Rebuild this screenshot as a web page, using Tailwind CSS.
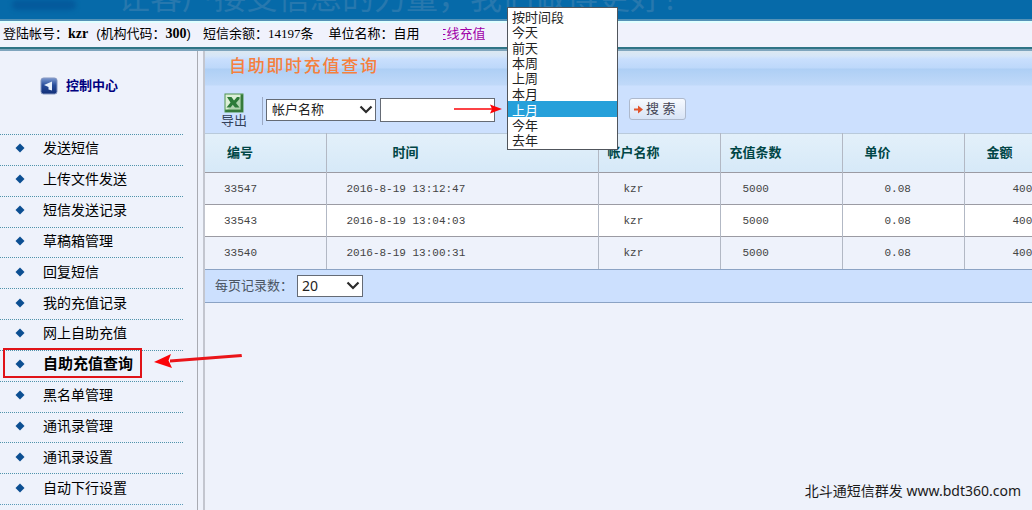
<!DOCTYPE html>
<html lang="zh-CN">
<head>
<meta charset="utf-8">
<title>自助即时充值查询</title>
<script src="https://cdn.jsdelivr.net/npm/@tailwindcss/browser@4"></script>
</head>
<body class="relative flex min-h-screen flex-col overflow-x-hidden bg-[#eef2fb] font-['Liberation_Sans','Noto_Sans_CJK_SC',sans-serif] text-[13px] text-black">

<header class="relative h-[21px] overflow-hidden border-b-2 border-[#5592b7] bg-[#066aa9]">
  <div class="absolute top-0 left-3 h-2.5 w-16 rounded-full bg-[#045a9c] blur-[2px]"></div>
  <p class="absolute -top-5 left-[118px] text-[32px] leading-9 whitespace-nowrap text-[#2778ae]">让客户接受信息的力量，我们做得更好！</p>
</header>

<div class="flex h-[30px] items-center border-y-2 border-t-[#e0ffff] border-b-[#7fa5bd] bg-[#f0f2fc] pb-1 pl-[3px] leading-5 whitespace-nowrap shadow-[inset_0_-2px_0_#2f7486]">
  <span>登陆帐号：<b class="font-['Liberation_Serif',serif] text-[14px]">kzr</b></span>
  <span class="ml-2">(机构代码：<b class="font-['Liberation_Serif',serif] text-[14px]">300</b>)</span>
  <span class="ml-3">短信余额：<span class="font-['Liberation_Serif',serif]">14197</span>条</span>
  <span class="ml-[15px]">单位名称：自用</span>
  <a href="#" class="ml-6 flex w-[42px] justify-end overflow-hidden text-[#a000a8]"><span>在线充值</span></a>
</div>

<div class="flex flex-1">
  <aside class="w-[198px] shrink-0 border-r border-[#a9abb2]">
    <h2 class="flex h-[83px] items-center gap-2 pb-3.5 pl-10 text-[13px] font-bold text-[#000080]">
      <svg class="size-[18px]" viewBox="0 0 18 18" aria-hidden="true">
        <defs><linearGradient id="tile" x1="0" y1="0" x2="0" y2="1"><stop offset="0" stop-color="#7d9ad0"/><stop offset=".45" stop-color="#274d9b"/><stop offset="1" stop-color="#122f78"/></linearGradient></defs>
        <rect x="1" y="1" width="16" height="16" rx="2.5" fill="url(#tile)" stroke="#8496c0"/>
        <path d="M4 8 L12 4.500 V13.500 L8.500 12.500 V10 Z" fill="#e8f1fc"/>
      </svg>
      控制中心
    </h2>
    <nav class="mr-3.5 border-b border-dotted border-[#5a9bb8]">
      <ul class="grid h-[370px] grid-rows-12 text-[14px]">
        <li class="flex items-center border-t border-dotted border-[#4f93ab] pb-[3px] pl-[15px]"><a href="#" class="flex items-center gap-[18px] leading-5"><svg class="size-2.5" viewBox="0 0 10 10" aria-hidden="true"><path d="M5 .5 L9.500 5 L5 9.500 L.5 5 Z" fill="#0c4f92"/></svg>发送短信</a></li>
        <li class="flex items-center border-t border-dotted border-[#4f93ab] pb-[3px] pl-[15px]"><a href="#" class="flex items-center gap-[18px] leading-5"><svg class="size-2.5" viewBox="0 0 10 10" aria-hidden="true"><path d="M5 .5 L9.500 5 L5 9.500 L.5 5 Z" fill="#0c4f92"/></svg>上传文件发送</a></li>
        <li class="flex items-center border-t border-dotted border-[#4f93ab] pb-[3px] pl-[15px]"><a href="#" class="flex items-center gap-[18px] leading-5"><svg class="size-2.5" viewBox="0 0 10 10" aria-hidden="true"><path d="M5 .5 L9.500 5 L5 9.500 L.5 5 Z" fill="#0c4f92"/></svg>短信发送记录</a></li>
        <li class="flex items-center border-t border-dotted border-[#4f93ab] pb-[3px] pl-[15px]"><a href="#" class="flex items-center gap-[18px] leading-5"><svg class="size-2.5" viewBox="0 0 10 10" aria-hidden="true"><path d="M5 .5 L9.500 5 L5 9.500 L.5 5 Z" fill="#0c4f92"/></svg>草稿箱管理</a></li>
        <li class="flex items-center border-t border-dotted border-[#4f93ab] pb-[3px] pl-[15px]"><a href="#" class="flex items-center gap-[18px] leading-5"><svg class="size-2.5" viewBox="0 0 10 10" aria-hidden="true"><path d="M5 .5 L9.500 5 L5 9.500 L.5 5 Z" fill="#0c4f92"/></svg>回复短信</a></li>
        <li class="flex items-center border-t border-dotted border-[#4f93ab] pb-[3px] pl-[15px]"><a href="#" class="flex items-center gap-[18px] leading-5"><svg class="size-2.5" viewBox="0 0 10 10" aria-hidden="true"><path d="M5 .5 L9.500 5 L5 9.500 L.5 5 Z" fill="#0c4f92"/></svg>我的充值记录</a></li>
        <li class="flex items-center border-t border-dotted border-[#4f93ab] pb-[3px] pl-[15px]"><a href="#" class="flex items-center gap-[18px] leading-5"><svg class="size-2.5" viewBox="0 0 10 10" aria-hidden="true"><path d="M5 .5 L9.500 5 L5 9.500 L.5 5 Z" fill="#0c4f92"/></svg>网上自助充值</a></li>
        <li class="relative flex items-center border-t border-dotted border-[#4f93ab] pb-[3px] pl-[15px]"><a href="#" aria-current="page" class="flex items-center gap-[18px] text-[15px] leading-5 font-bold"><svg class="size-2.5" viewBox="0 0 10 10" aria-hidden="true"><path d="M5 .5 L9.500 5 L5 9.500 L.5 5 Z" fill="#0c4f92"/></svg>自助充值查询</a>
          <span class="absolute -top-[3px] left-[3px] h-[30px] w-[139px] border-2 border-[#e01318]"></span>
          <svg class="absolute top-0 left-[154px] z-10 h-[22px] w-[90px]" viewBox="0 0 90 22" aria-hidden="true"><path d="M87.500 3 L88 6 L16 11.500 L16 8.500 Z" fill="#ea1519"/><path d="M0 11 L17 3 L14.500 9.500 L18 17 Z" fill="#fb0509"/></svg>
        </li>
        <li class="flex items-center border-t border-dotted border-[#4f93ab] pb-[3px] pl-[15px]"><a href="#" class="flex items-center gap-[18px] leading-5"><svg class="size-2.5" viewBox="0 0 10 10" aria-hidden="true"><path d="M5 .5 L9.500 5 L5 9.500 L.5 5 Z" fill="#0c4f92"/></svg>黑名单管理</a></li>
        <li class="flex items-center border-t border-dotted border-[#4f93ab] pb-[3px] pl-[15px]"><a href="#" class="flex items-center gap-[18px] leading-5"><svg class="size-2.5" viewBox="0 0 10 10" aria-hidden="true"><path d="M5 .5 L9.500 5 L5 9.500 L.5 5 Z" fill="#0c4f92"/></svg>通讯录管理</a></li>
        <li class="flex items-center border-t border-dotted border-[#4f93ab] pb-[3px] pl-[15px]"><a href="#" class="flex items-center gap-[18px] leading-5"><svg class="size-2.5" viewBox="0 0 10 10" aria-hidden="true"><path d="M5 .5 L9.500 5 L5 9.500 L.5 5 Z" fill="#0c4f92"/></svg>通讯录设置</a></li>
        <li class="flex items-center border-t border-dotted border-[#4f93ab] pb-[3px] pl-[15px]"><a href="#" class="flex items-center gap-[18px] leading-5"><svg class="size-2.5" viewBox="0 0 10 10" aria-hidden="true"><path d="M5 .5 L9.500 5 L5 9.500 L.5 5 Z" fill="#0c4f92"/></svg>自动下行设置</a></li>
      </ul>
    </nav>
  </aside>

  <main class="ml-[5px] flex min-w-0 flex-1 flex-col overflow-hidden border-l-2 border-[#c3c6cf]">
    <div class="h-[82px] shrink-0 bg-[linear-gradient(180deg,#dce8f1_0px,#d6e6f8_5px,#c9dffd_8px,#bdd8fa_17px,#aecff5_18px,#c0d9f9_34px,#cce0fe_35px,#cce0fe_100%)]">
      <h1 class="h-8 pl-6 text-[17px] leading-8 font-medium tracking-widest text-[#f5803e]">自助即时充值查询</h1>
      <form class="relative flex items-start pt-2.5 pl-[15px]">
        <button type="button" class="flex w-7 flex-col items-center text-[13px] leading-[15px] text-[#33415a]">
          <svg class="h-5 w-5" viewBox="0 0 20 20" aria-hidden="true">
            <rect x=".5" y=".5" width="19" height="19" fill="#4f9350"/>
            <rect x="1.500" y="1.500" width="15" height="15" fill="#dcefd6"/>
            <path d="M3 4 H7.500 L10 7.500 L13 4 H15.500 V6 L12 10 L15.500 14.500 H11 L8.800 11.800 L6.500 14.500 H2.500 L6.500 9.500 Z" fill="#2d7a38"/>
            <path d="M2 18 L18 2 V18 Z" fill="#2e7a3a" opacity=".25"/>
            <path d="M1.500 18 H18 V2" fill="none" stroke="#367a3b" stroke-width="2"/>
          </svg>
          <span>导出</span>
        </button>
        <span class="mt-1 ml-3.5 h-7 w-px bg-[#9ba9c4]"></span>
        <span class="relative mt-1.5 ml-[3px] h-[22px] w-[110px]">
          <select aria-label="查询字段" class="h-full w-full appearance-none border border-[#656b75] bg-white pl-[5px] text-[13px] leading-5 text-[#222]"><option>帐户名称</option></select>
          <svg class="pointer-events-none absolute top-1.5 right-[3px] h-2.5 w-[14px]" viewBox="0 0 14 10" aria-hidden="true"><path d="M1.500 1.500 L7 7 L12.500 1.500" fill="none" stroke="#2b2b2b" stroke-width="2.200"/></svg>
        </span>
        <input type="text" aria-label="关键字" class="mt-[5px] ml-1 h-6 w-[115px] border border-[#656b75] bg-white px-1">
        <svg class="absolute top-5 left-[248px] h-3 w-[50px]" viewBox="0 0 50 12" aria-hidden="true"><path d="M1 6 H40" stroke="#fb0509" stroke-width="1.600"/><path d="M49 6 L37 1.500 L39 6 L37 10.500 Z" fill="#fb0509"/></svg>
        <button type="submit" class="mt-[5px] ml-[134px] flex h-[22px] w-[57px] items-center rounded-[3px] border border-[#aeb9cc] bg-linear-to-b from-[#f7faff] to-[#d8e4f6] pl-[3px] text-[13px] leading-5 text-[#444455]">
          <svg class="size-[11px]" viewBox="0 0 11 11" aria-hidden="true"><path d="M1 4.500 H5 V1.500 L10 5.500 L5 9.500 V6.500 H1 Z" fill="#e2552c"/></svg>
          <span class="ml-0.5">搜 索</span>
        </button>
      </form>
    </div>

    <table class="w-[881px] table-fixed border-collapse border-t border-[#b9cadb] text-left font-['Liberation_Mono','Noto_Sans_CJK_SC',monospace] text-[11px] text-[#444444]">
      <colgroup><col class="w-[121px]"><col class="w-[272px]"><col class="w-[122px]"><col class="w-[122px]"><col class="w-[122px]"><col class="w-[122px]"></colgroup>
      <thead>
        <tr class="h-[39px] border-b border-[#9b9ba3] bg-linear-to-b from-[#e3f0fa] to-[#d6e9f8] text-[13px] text-[#004646]">
          <th class="border-r border-[#b2b8c4] pt-0.5 pl-[22px]">编号</th><th class="border-r border-[#b2b8c4] pt-0.5 pl-[66px]">时间</th><th class="border-r border-[#b2b8c4] pt-0.5 pl-[9px]">帐户名称</th><th class="border-r border-[#b2b8c4] pt-0.5 pl-[9px]">充值条数</th><th class="border-r border-[#b2b8c4] pt-0.5 pl-[22px]">单价</th><th class="pt-0.5 pl-[22px]">金额</th>
        </tr>
      </thead>
      <tbody>
        <tr class="h-8 border-b border-[#9b9ba3]"><td class="border-r border-[#b2b8c4] pt-0.5 pl-[19px]">33547</td><td class="border-r border-[#b2b8c4] pt-0.5 pl-5">2016-8-19 13:12:47</td><td class="border-r border-[#b2b8c4] pt-0.5 pl-[25px]">kzr</td><td class="border-r border-[#b2b8c4] pt-0.5 pl-[22px]">5000</td><td class="border-r border-[#b2b8c4] pt-0.5 pl-[42px]">0.08</td><td class="pt-0.5 pl-12">400</td></tr>
        <tr class="h-8 border-b border-[#9b9ba3] bg-white"><td class="border-r border-[#b2b8c4] pt-0.5 pl-[19px]">33543</td><td class="border-r border-[#b2b8c4] pt-0.5 pl-5">2016-8-19 13:04:03</td><td class="border-r border-[#b2b8c4] pt-0.5 pl-[25px]">kzr</td><td class="border-r border-[#b2b8c4] pt-0.5 pl-[22px]">5000</td><td class="border-r border-[#b2b8c4] pt-0.5 pl-[42px]">0.08</td><td class="pt-0.5 pl-12">400</td></tr>
        <tr class="h-8"><td class="border-r border-[#b2b8c4] pl-[19px]">33540</td><td class="border-r border-[#b2b8c4] pl-5">2016-8-19 13:00:31</td><td class="border-r border-[#b2b8c4] pl-[25px]">kzr</td><td class="border-r border-[#b2b8c4] pl-[22px]">5000</td><td class="border-r border-[#b2b8c4] pl-[42px]">0.08</td><td class="pl-12">400</td></tr>
      </tbody>
    </table>

    <div class="flex h-[34px] shrink-0 items-center border-y border-[#8ba3c4] bg-[#cce0fe] pl-2.5 text-[#4b5563]">
      <label for="page-size">每页记录数：</label>
      <span class="relative ml-1 h-[22px] w-[66px]">
        <select id="page-size" class="h-full w-full appearance-none border border-[#656b75] bg-white pl-1 font-['Noto_Sans',sans-serif] text-[14px] leading-5 text-[#222]"><option>20</option></select>
        <svg class="pointer-events-none absolute top-1.5 right-[3px] h-2.5 w-[14px]" viewBox="0 0 14 10" aria-hidden="true"><path d="M1.500 1.500 L7 7 L12.500 1.500" fill="none" stroke="#2b2b2b" stroke-width="2.200"/></svg>
      </span>
    </div>

    <p class="mt-auto pr-[11px] pb-[9px] text-right font-['Noto_Sans','Noto_Sans_CJK_SC',sans-serif] text-[14px] leading-5 text-[#1a1a1a]">北斗通短信群发 www.bdt360.com</p>
  </main>
</div>

<select size="9" aria-label="时间段" class="absolute top-[7px] left-[507px] z-20 h-[143px] w-[111px] appearance-none overflow-hidden rounded-none border border-[#50555c] bg-white pt-px text-[13px] text-[#222]">
  <option class="flex h-[15px] min-h-0 items-center px-1 py-0">按时间段</option>
  <option class="flex h-[15px] min-h-0 items-center px-1 py-0">今天</option>
  <option class="flex h-4 min-h-0 items-center px-1 py-0">前天</option>
  <option class="flex h-[15px] min-h-0 items-center px-1 py-0">本周</option>
  <option class="flex h-[15px] min-h-0 items-center px-1 py-0">上周</option>
  <option class="flex h-4 min-h-0 items-center px-1 py-0">本月</option>
  <option selected class="flex h-4 min-h-0 items-center bg-linear-to-b from-[#26a0da] to-[#26a0da] px-1 py-0 [-webkit-text-fill-color:#fff]">上月</option>
  <option class="flex h-[15px] min-h-0 items-center px-1 py-0">今年</option>
  <option class="flex h-[15px] min-h-0 items-center px-1 py-0">去年</option>
</select>

</body>
</html>
